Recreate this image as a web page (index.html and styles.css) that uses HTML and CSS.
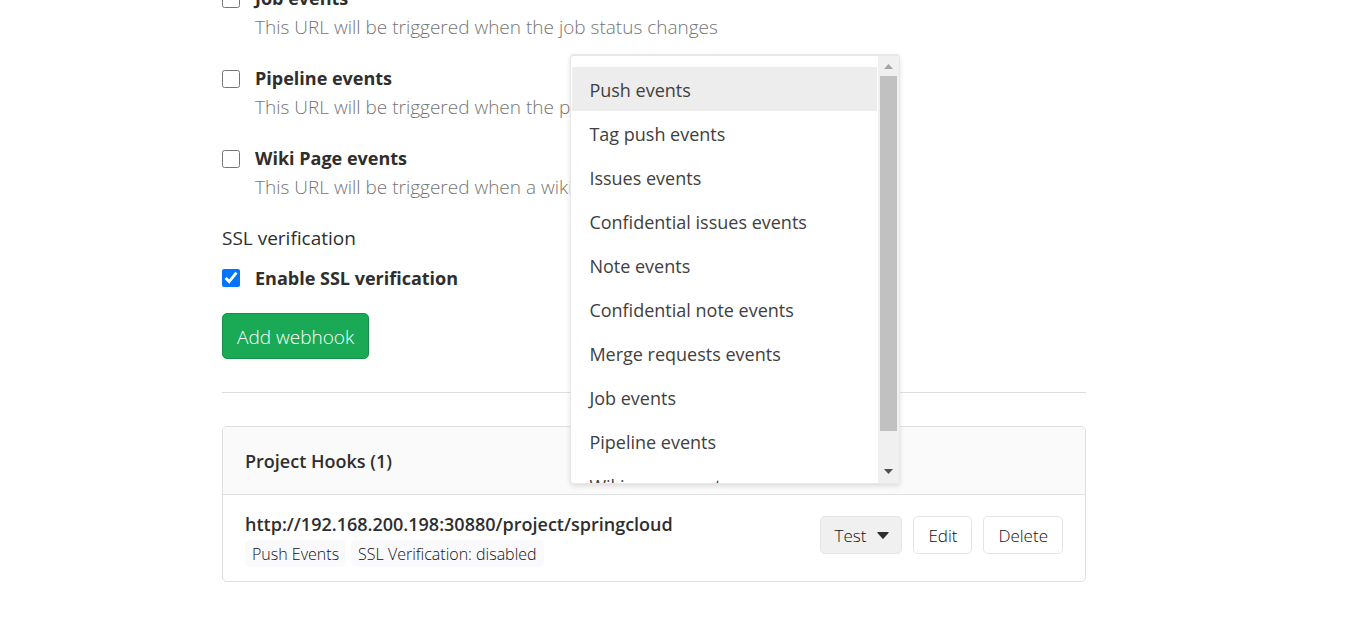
FILE: index.html
```html
<!DOCTYPE html>
<html lang="en">
<head>
<meta charset="utf-8">
<title>Webhooks</title>
<link rel="stylesheet" href="styles.css">
</head>
<body>
<main class="page">
  <form class="hook-form">
    <div class="option">
      <input class="check" type="checkbox" id="job">
      <div>
        <label class="option-title" for="job">Job events</label>
        <p class="help">This URL will be triggered when the job status changes</p>
      </div>
    </div>
    <div class="option">
      <input class="check" type="checkbox" id="pipeline">
      <div>
        <label class="option-title" for="pipeline">Pipeline events</label>
        <p class="help">This URL will be triggered when the pipeline status changes</p>
      </div>
    </div>
    <div class="option">
      <input class="check" type="checkbox" id="wiki">
      <div>
        <label class="option-title" for="wiki">Wiki Page events</label>
        <p class="help">This URL will be triggered when a wiki page is created</p>
      </div>
    </div>
    <h2 class="group-title">SSL verification</h2>
    <div class="option ssl">
      <input class="check" type="checkbox" id="ssl" checked>
      <label class="option-title" for="ssl">Enable SSL verification</label>
    </div>
    <button class="btn-add" type="button">Add webhook</button>
  </form>
  <hr class="rule">
  <section class="card">
    <h2 class="card-header">Project Hooks (1)</h2>
    <div class="card-body">
      <div class="hook">
        <div class="hook-url">http://192.168.200.198:30880/project/springcloud</div>
        <div class="tags">
          <span class="tag">Push Events</span>
          <span class="tag">SSL Verification: disabled</span>
        </div>
      </div>
      <div class="actions">
        <div class="dropdown">
          <button class="btn btn-open" type="button" aria-expanded="true">Test
            <svg class="caret" viewBox="0 0 12 7" aria-hidden="true"><path d="M1 0h10q1.300 0 .5 1L6.600 6.400q-.6.600-1.200 0L.5 1Q-.3 0 1 0z"/></svg>
          </button>
          <div class="menu">
            <ul class="menu-list">
              <li><button class="item active" type="button">Push events</button></li>
              <li><button class="item" type="button">Tag push events</button></li>
              <li><button class="item" type="button">Issues events</button></li>
              <li><button class="item" type="button">Confidential issues events</button></li>
              <li><button class="item" type="button">Note events</button></li>
              <li><button class="item" type="button">Confidential note events</button></li>
              <li><button class="item" type="button">Merge requests events</button></li>
              <li><button class="item" type="button">Job events</button></li>
              <li><button class="item" type="button">Pipeline events</button></li>
              <li><button class="item" type="button">Wiki page events</button></li>
            </ul>
            <div class="scrollbar" aria-hidden="true">
              <svg class="arrow" viewBox="0 0 9 5"><path d="M0 5L4.500 0L9 5z" fill="#a3a3a3"/></svg>
              <div class="track"><div class="thumb"></div></div>
              <svg class="arrow" viewBox="0 0 9 5"><path d="M0 0L4.500 5L9 0z" fill="#505050"/></svg>
            </div>
          </div>
        </div>
        <button class="btn" type="button">Edit</button>
        <button class="btn" type="button">Delete</button>
      </div>
    </div>
  </section>
</main>
</body>
</html>
```
FILE: styles.css
```css
* {
  box-sizing: border-box;
}

body {
  margin: 0;
  overflow: hidden;
  background: #fff;
  color: #2e2e2e;
  font: 18px/29px "Open Sans", "Noto Sans", sans-serif;
}

h2, p, ul {
  margin: 0;
  padding: 0;
}

button {
  font: inherit;
  color: inherit;
}

.page {
  max-width: 906px;
  margin: -16px auto 0;
  padding-right: 42px;
}

.option {
  display: flex;
  align-items: flex-start;
  gap: 15px;
  margin-bottom: 22px;
}

.check {
  flex: none;
  width: 18px;
  height: 18px;
  margin: 6px 0 0;
  accent-color: #0075ff;
}

.option-title {
  display: block;
  font-weight: 700;
}

.help {
  color: #757575;
  font-size: 19px;
  font-weight: 300;
}

.group-title {
  margin-bottom: 11px;
  font-size: 19px;
  font-weight: 400;
}

.option.ssl {
  margin-bottom: 20px;
}

.option.ssl .check {
  margin-top: 5px;
}

.btn-add {
  display: block;
  padding: 9px 14px 6px;
  border: 1px solid #168f48;
  border-radius: 5px;
  background: #1aaa55;
  color: #fff;
  font-size: 19px;
  font-weight: 350;
}

.rule {
  margin: 33px 0;
  border: 0;
  border-top: 1px solid #dfdfdf;
}

.card {
  border: 1px solid #dfdfdf;
  border-radius: 5px;
}

.card-header {
  padding: 20px 22px 18px;
  border-bottom: 1px solid #dfdfdf;
  border-radius: 4px 4px 0 0;
  background: #fafafa;
  font-size: 18px;
  font-weight: 600;
}

.card-body {
  display: flex;
  align-items: flex-start;
  justify-content: space-between;
  padding: 15px 22px 14px;
}

.hook-url {
  font-weight: 600;
}

.tags {
  display: flex;
  gap: 5px;
  padding-top: 1px;
}

.tag {
  padding: 1px 7px 0;
  border-radius: 5px;
  background: #fafafc;
  color: #111;
  font-size: 16px;
  font-weight: 300;
  line-height: 26px;
}

.actions {
  display: flex;
  gap: 11px;
  padding-top: 6px;
}

.dropdown {
  position: relative;
}

.btn {
  display: flex;
  align-items: center;
  gap: 11px;
  height: 38px;
  padding: 0 14px;
  border: 1px solid #e5e5e5;
  border-radius: 5px;
  background: #fff;
  color: #111;
  font-size: 17px;
  font-weight: 300;
}

.btn-open {
  padding-right: 12px;
  background: #f0f0f0;
}

.caret {
  width: 12px;
  height: 7px;
  fill: #2e2e2e;
}

.menu {
  position: absolute;
  right: 2px;
  bottom: calc(100% + 32px);
  display: flex;
  width: 330px;
  height: 430px;
  overflow: hidden;
  border: 1px solid #e8e8e8;
  border-top-width: 2px;
  border-radius: 4px;
  background: #fff;
  box-shadow: 0 2px 5px rgba(0, 0, 0, 0.12);
}

.menu-list {
  flex: 1;
  padding: 11px 1px 0;
  list-style: none;
}

.item {
  display: block;
  width: 100%;
  height: 44px;
  padding: 2px 17px 0;
  border: 0;
  background: none;
  color: #404040;
  font-size: 18px;
  font-weight: 400;
  text-align: left;
}

.item.active {
  background: #ededed;
}

.scrollbar {
  display: flex;
  flex-direction: column;
  align-items: center;
  justify-content: space-between;
  gap: 7px;
  width: 21px;
  padding: 8px 2px 9px;
  background: #f0f0f0;
}

.arrow {
  flex: none;
  width: 9px;
  height: 5px;
}

.track {
  flex: 1;
  width: 17px;
}

.thumb {
  height: 92%;
  background: #c1c1c1;
}
```
